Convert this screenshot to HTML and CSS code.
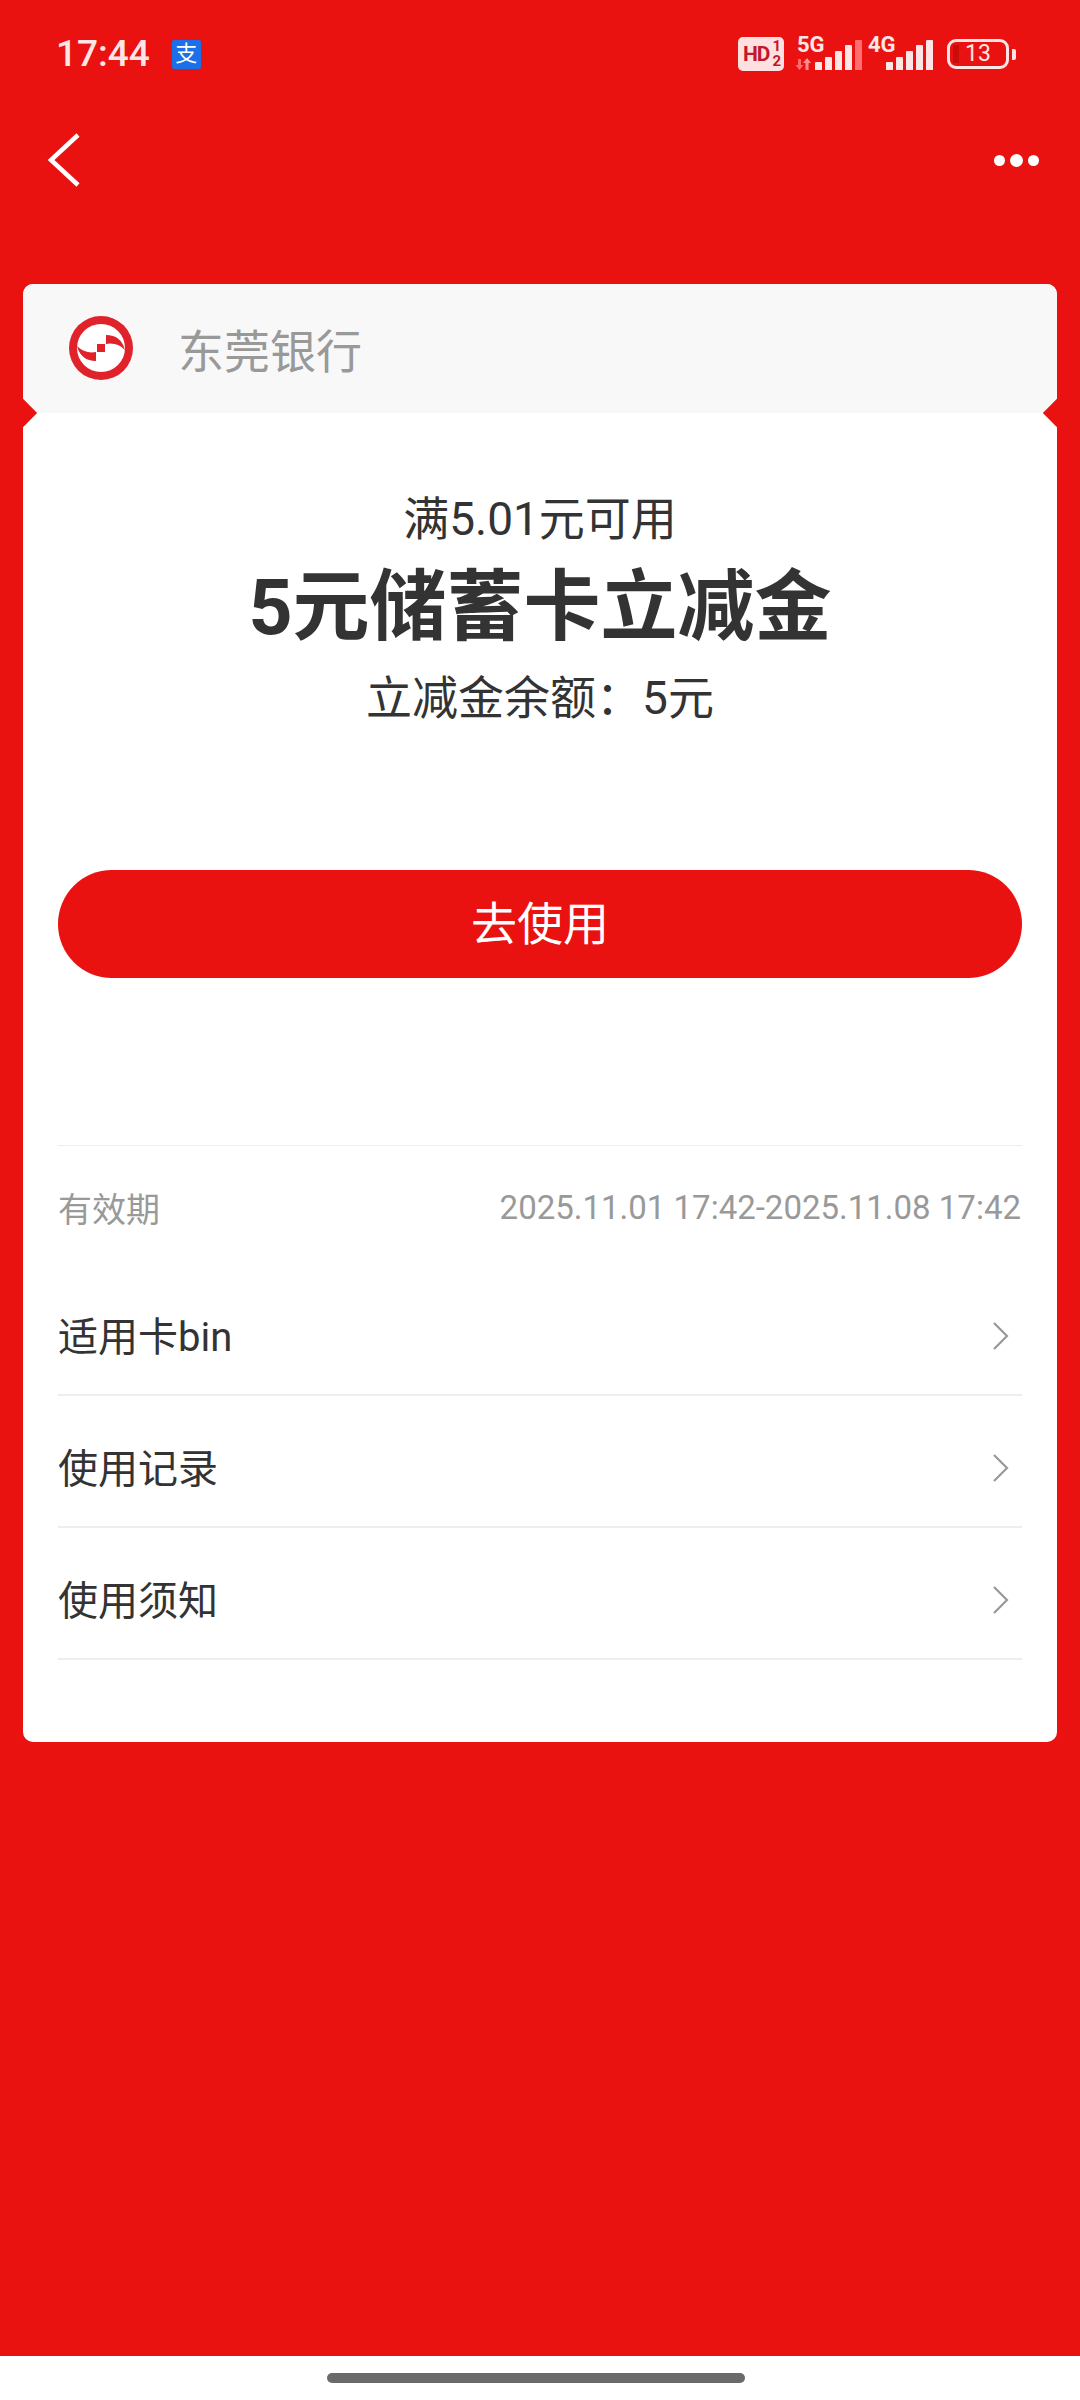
FILE: index.html
```html
<!DOCTYPE html>
<html lang="zh-CN">
<head>
<meta charset="UTF-8">
<title>5元储蓄卡立减金</title>
<link rel="stylesheet" href="styles.css">
</head>
<body>
    <div class="page">
        <!-- Status bar -->
        <div class="status-bar">
            <span class="clock">17:44</span>
            <span class="pay-badge">支</span>
            <div class="status-icons">
                <div class="hd-badge">
                    <span class="hd-text">HD</span>
                    <span class="hd-sims"><span>1</span><span>2</span></span>
                </div>
                <div class="net net-5g">
                    <span class="net-label">5G</span>
                    <svg class="net-arrows" width="17" height="12" viewBox="0 0 17 12">
                        <path d="M3 1H6V7H8.500L4.500 12L0.500 7H3Z" fill="#ff6b6b"/>
                        <path d="M10.500 12V5H8L12 0L16 5H13.500V12Z" fill="#ff8f8f"/>
                    </svg>
                    <div class="bars">
                        <i class="bar b1"></i><i class="bar b2"></i><i class="bar b3"></i><i class="bar b4"></i><i class="bar b5 dim"></i>
                    </div>
                </div>
                <div class="net net-4g">
                    <span class="net-label">4G</span>
                    <div class="bars">
                        <i class="bar b1"></i><i class="bar b2"></i><i class="bar b3"></i><i class="bar b4"></i><i class="bar b5"></i>
                    </div>
                </div>
                <div class="battery">
                    <div class="battery-body">
                        <i class="battery-level"></i>
                        <span>13</span>
                    </div>
                    <i class="battery-cap"></i>
                </div>
            </div>
        </div>

        <!-- Nav -->
        <div class="nav">
            <svg width="34" height="56" viewBox="0 0 34 56">
                <polyline points="31,3 4,28 31,53" fill="none" stroke="#fff" stroke-width="4.500"/>
            </svg>
            <div class="more"><i></i><i class="mid"></i><i></i></div>
        </div>

        <!-- Coupon card -->
        <div class="card">
            <div class="card-head">
                <svg class="bank-logo" width="66" height="66" viewBox="0 0 66 66">
                    <circle cx="33" cy="33" r="32" fill="#e0222b"/>
                    <circle cx="33" cy="33" r="24" fill="#fff"/>
                    <path d="M9 31Q13 46 28 46V37Q17 39 9 31Z" fill="#e0222b"/>
                    <path d="M57 35Q53 20 38 20V29Q49 27 57 35Z" fill="#e0222b"/>
                    <rect x="29" y="29" width="8" height="8" fill="#e0222b"/>
                </svg>
                <span class="bank-name">东莞银行</span>
            </div>
            <div class="card-body">
                <div class="coupon-info">
                    <div class="coupon-rule">满5.01元可用</div>
                    <div class="coupon-title">5元储蓄卡立减金</div>
                    <div class="coupon-balance">立减金余额：5元</div>
                </div>
                <div class="use-btn">去使用</div>
                <div class="validity">
                    <span class="validity-label">有效期</span>
                    <span class="validity-date">2025.11.01 17:42-2025.11.08 17:42</span>
                </div>
                <div class="link-row">
                    <span>适用卡bin</span>
                    <svg width="18" height="30" viewBox="0 0 18 30"><polyline points="2,2 15,15 2,28" fill="none" stroke="#999" stroke-width="2.200"/></svg>
                </div>
                <div class="link-row">
                    <span>使用记录</span>
                    <svg width="18" height="30" viewBox="0 0 18 30"><polyline points="2,2 15,15 2,28" fill="none" stroke="#999" stroke-width="2.200"/></svg>
                </div>
                <div class="link-row">
                    <span>使用须知</span>
                    <svg width="18" height="30" viewBox="0 0 18 30"><polyline points="2,2 15,15 2,28" fill="none" stroke="#999" stroke-width="2.200"/></svg>
                </div>
            </div>
        </div>

        <!-- Gesture bar -->
        <div class="gesture-bar"><i></i></div>
    </div>
</body>
</html>
```

FILE: styles.css
```css
* {
    box-sizing: border-box;
}
body {
    margin: 0;
    font-family: Roboto, "Noto Sans CJK SC", sans-serif;
    background-color: #ea1210;
}
i {
    display: block;
}
.page {
    width: 1080px;
    height: 2400px;
    display: flex;
    flex-direction: column;
    background-color: #ea1210;
}

/* Status bar */
.status-bar {
    height: 108px;
    padding: 36px 64px 0 56px;
    display: flex;
    align-items: flex-start;
    color: #ffe6e6;
}
.clock {
    font-size: 37px;
    line-height: 36px;
    font-weight: 500;
}
.pay-badge {
    width: 29px;
    height: 29px;
    margin: 4px 0 0 22px;
    background-color: #1b6fe8;
    border-radius: 2px;
    color: #fff;
    font-size: 22px;
    line-height: 28px;
    text-align: center;
}
.status-icons {
    margin-left: auto;
    display: flex;
    align-items: flex-start;
}
.hd-badge {
    width: 46px;
    height: 34px;
    margin-top: 1px;
    background-color: #ffe0e0;
    border-radius: 5px;
    color: #c2182a;
    font-weight: 700;
    display: flex;
    align-items: center;
    padding-left: 5px;
}
.hd-text {
    font-size: 21px;
    letter-spacing: -1px;
}
.hd-sims {
    display: flex;
    flex-direction: column;
    margin-left: 3px;
    font-size: 15px;
    line-height: 15px;
}
.net {
    position: relative;
    width: 65px;
    height: 34px;
}
.net-5g {
    margin-left: 13px;
}
.net-4g {
    margin-left: 6px;
}
.net-label {
    position: absolute;
    left: 0;
    top: 0;
    font-size: 22px;
    line-height: 18px;
    font-weight: 700;
}
.net-arrows {
    position: absolute;
    left: -2px;
    bottom: 0;
}
.bars {
    position: absolute;
    right: 0;
    bottom: 0;
    display: flex;
    align-items: flex-end;
    gap: 3px;
}
.bar {
    width: 7px;
    background-color: #ffe6e6;
    border-radius: 1px 1px 0 0;
}
.b1 { height: 8px; }
.b2 { height: 13px; }
.b3 { height: 19px; }
.b4 { height: 25px; }
.b5 { height: 30px; }
.bar.dim {
    background-color: #ff6f6f;
}
.battery {
    margin: 3px 0 0 14px;
    display: flex;
    align-items: center;
}
.battery-body {
    position: relative;
    width: 62px;
    height: 30px;
    border: 3px solid #ffe6e6;
    border-radius: 9px;
    font-size: 23px;
    line-height: 24px;
    text-align: center;
}
.battery-level {
    position: absolute;
    left: 3px;
    top: 3px;
    bottom: 3px;
    width: 6px;
    background-color: #c90d0b;
}
.battery-cap {
    width: 4px;
    height: 11px;
    margin-left: 3px;
    background-color: #ffe6e6;
    border-radius: 0 2px 2px 0;
}

/* Nav */
.nav {
    height: 104px;
    padding: 0 41px 0 47px;
    display: flex;
    align-items: center;
    justify-content: space-between;
}
.more {
    display: flex;
    align-items: center;
    gap: 5px;
}
.more i {
    width: 11px;
    height: 11px;
    background-color: #fff;
    border-radius: 50%;
}
.more i.mid {
    width: 13px;
    height: 13px;
}

/* Coupon card */
.card {
    position: relative;
    margin: 72px 23px 0;
    height: 1458px;
    border-radius: 10px;
    overflow: hidden;
    background-color: #fff;
}
.card::before,
.card::after {
    content: "";
    position: absolute;
    top: 119px;
    width: 20px;
    height: 20px;
    background-color: #ea1210;
    transform: rotate(45deg);
}
.card::before {
    left: -10px;
}
.card::after {
    right: -10px;
}
.card-head {
    height: 129px;
    padding: 0 0 2px 45px;
    background-color: #f8f8f8;
    display: flex;
    align-items: center;
}
.bank-name {
    margin-left: 44px;
    font-size: 46px;
    color: #999;
}
.card-body {
    padding: 0 35px;
}
.coupon-info {
    padding-top: 76px;
    text-align: center;
    color: #333;
}
.coupon-rule {
    font-size: 46px;
    line-height: 60px;
}
.coupon-title {
    margin-top: 9px;
    font-size: 77px;
    line-height: 100px;
    font-weight: 700;
}
.coupon-balance {
    margin-top: 10px;
    font-size: 46px;
    line-height: 60px;
}
.use-btn {
    height: 108px;
    margin-top: 142px;
    border-radius: 54px;
    background-color: #ea1210;
    color: #fff;
    font-size: 46px;
    line-height: 108px;
    text-align: center;
}
.validity {
    margin-top: 167px;
    height: 119px;
    padding: 5px 1px 0 0;
    border-top: 1px solid #eee;
    display: flex;
    align-items: center;
    justify-content: space-between;
}
.validity-label {
    font-size: 34px;
    color: #999;
}
.validity-date {
    font-size: 33px;
    color: #999;
}
.link-row {
    height: 132px;
    padding: 9px 12px 0 0;
    border-bottom: 2px solid #eee;
    display: flex;
    align-items: center;
    justify-content: space-between;
    font-size: 40px;
    color: #333;
}
.link-row svg {
    margin-top: 5px;
}

/* Gesture bar */
.gesture-bar {
    margin-top: auto;
    height: 44px;
    padding-top: 17px;
    background-color: #fff;
}
.gesture-bar i {
    width: 418px;
    height: 10px;
    margin-left: 327px;
    background-color: #6a6a6a;
    border-radius: 5px;
}
```
